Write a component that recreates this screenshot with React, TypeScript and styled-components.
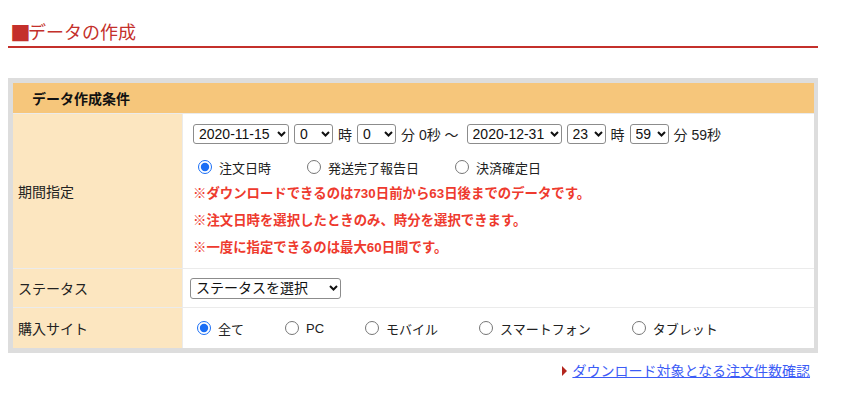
import React from 'react';
import styled, { createGlobalStyle } from 'styled-components';

const GlobalStyle = createGlobalStyle`
  body {
    margin: 0;
    background: #fff;
    color: #222;
    font-family: "Liberation Sans", "Noto Sans CJK JP", sans-serif;
  }
`;

const Page = styled.div`
  width: 810px;
  margin-left: 8px;
  padding-top: 19px;
`;

const Title = styled.h2`
  display: flex;
  align-items: center;
  margin: 0;
  height: 27px;
  padding-left: 4px;
  padding-bottom: 3px;
  box-sizing: border-box;
  font-size: 18px;
  font-weight: 400;
  color: #c4302b;
  border-bottom: 2px solid #c4302b;
  box-sizing: content-box;
  height: 24px;
`;

// the red square in front of the title
const Mark = styled.span`
  font-family: "Noto Sans CJK JP", sans-serif;
  font-size: 17px;
  margin-right: -1px;
  transform: scale(1.2);
`;

const FormBox = styled.div`
  margin-top: 30px;
  background: #dddddd;
  padding: 5px 4px 5px 5px;
`;

const Grid = styled.div`
  display: grid;
  grid-template-columns: 169px 1fr;
  grid-template-rows: 30px 154px 38px 40px;
  gap: 1px;
  background: #ebebeb;
`;

const Header = styled.div`
  grid-column: 1 / -1;
  display: flex;
  align-items: center;
  padding-left: 19px;
  background: #f6c67b;
  font-size: 14px;
  font-weight: 700;
  color: #111;
`;

const LabelCell = styled.div`
  display: flex;
  align-items: center;
  padding-left: 5px;
  background: #fce6c0;
  font-size: 14px;
`;

const ValueCell = styled.div<{ $pad: number; $column?: boolean }>`
  display: flex;
  flex-direction: ${p => (p.$column ? 'column' : 'row')};
  align-items: ${p => (p.$column ? 'stretch' : 'center')};
  padding-left: ${p => p.$pad}px;
  background: #fff;
`;

const SelectLine = styled.div`
  display: flex;
  align-items: center;
  gap: 5px;
  margin-top: 10px;
  height: 20px;
  font-size: 14px;
`;

const Between = styled.span`
  margin-right: 3px;
`;

const SelectWrap = styled.span`
  position: relative;
  display: inline-flex;
`;

const Select = styled.select<{ $w: number; $h?: number }>`
  appearance: none;
  -webkit-appearance: none;
  box-sizing: border-box;
  width: ${p => p.$w}px;
  height: ${p => p.$h || 20}px;
  padding: 0 0 0 5px;
  border: 1px solid #8c8c8c;
  border-radius: 3px;
  background: #fff;
  color: #111;
  font: 14px "Liberation Sans", "Noto Sans CJK JP", sans-serif;
`;

const Chevron = styled.svg`
  position: absolute;
  right: 3px;
  top: 50%;
  transform: translateY(-50%);
  pointer-events: none;
`;

const RadioLine = styled.div<{ $gap: number; $indent: number; $top?: number }>`
  display: flex;
  align-items: center;
  gap: ${p => p.$gap}px;
  margin-top: ${p => p.$top || 0}px;
  padding-left: ${p => p.$indent}px;
  height: 22px;
  font-size: 13px;
`;

const RadioLabel = styled.label`
  display: flex;
  align-items: center;
  gap: 7px;
`;

const Radio = styled.input`
  width: 14px;
  height: 14px;
  margin: 0;
  accent-color: #1a6ef5;
`;

const Notes = styled.div`
  margin-top: 2px;
`;

const Note = styled.p`
  margin: 0;
  line-height: 27px;
  font-size: 13.4px;
  font-weight: 700;
  color: #ee3a2e;
`;

const LinkRow = styled.div`
  display: flex;
  justify-content: flex-end;
  align-items: center;
  margin-top: 8px;
  padding-right: 8px;
  line-height: 20px;

  &::before {
    content: '';
    margin-right: 5px;
    border-left: 5px solid #b3261e;
    border-top: 5px solid transparent;
    border-bottom: 5px solid transparent;
  }
`;

const Link = styled.a`
  font-size: 14px;
  color: #3c5cf6;
  text-decoration: underline;
`;

const Dropdown = ({ w, h, value }: { w: number; h?: number; value: string }) => (
  <SelectWrap>
    <Select $w={w} $h={h} defaultValue={value}>
      <option value={value}>{value}</option>
    </Select>
    <Chevron width="9" height="6" viewBox="0 0 9 6">
      <polyline points="1,1 4.5,4.5 8,1" fill="none" stroke="#111" strokeWidth="2" />
    </Chevron>
  </SelectWrap>
);

const Choice = ({ name, label, checked }: { name: string; label: string; checked?: boolean }) => (
  <RadioLabel>
    <Radio type="radio" name={name} defaultChecked={checked} />
    {label}
  </RadioLabel>
);

export default function App() {
  return (
    <Page>
      <GlobalStyle />
      <Title>
        <Mark>■</Mark>データの作成
      </Title>
      <FormBox>
        <Grid>
          <Header>データ作成条件</Header>

          <LabelCell>期間指定</LabelCell>
          <ValueCell $pad={10} $column>
            <SelectLine>
              <Dropdown w={96} value="2020-11-15" />
              <Dropdown w={39} value="0" />
              <span>時</span>
              <Dropdown w={39} value="0" />
              <Between>分 0秒 〜</Between>
              <Dropdown w={95} value="2020-12-31" />
              <Dropdown w={39} value="23" />
              <span>時</span>
              <Dropdown w={39} value="59" />
              <span>分 59秒</span>
            </SelectLine>
            <RadioLine $gap={36} $indent={5} $top={12}>
              <Choice name="period" label="注文日時" checked />
              <Choice name="period" label="発送完了報告日" />
              <Choice name="period" label="決済確定日" />
            </RadioLine>
            <Notes>
              <Note>※ダウンロードできるのは730日前から63日後までのデータです。</Note>
              <Note>※注文日時を選択したときのみ、時分を選択できます。</Note>
              <Note>※一度に指定できるのは最大60日間です。</Note>
            </Notes>
          </ValueCell>

          <LabelCell>ステータス</LabelCell>
          <ValueCell $pad={7}>
            <Dropdown w={151} h={21} value="ステータスを選択" />
          </ValueCell>

          <LabelCell>購入サイト</LabelCell>
          <ValueCell $pad={7}>
            <RadioLine $gap={41} $indent={7}>
              <Choice name="site" label="全て" checked />
              <Choice name="site" label="PC" />
              <Choice name="site" label="モバイル" />
              <Choice name="site" label="スマートフォン" />
              <Choice name="site" label="タブレット" />
            </RadioLine>
          </ValueCell>
        </Grid>
      </FormBox>
      <LinkRow>
        <Link href="#">ダウンロード対象となる注文件数確認</Link>
      </LinkRow>
    </Page>
  );
}
